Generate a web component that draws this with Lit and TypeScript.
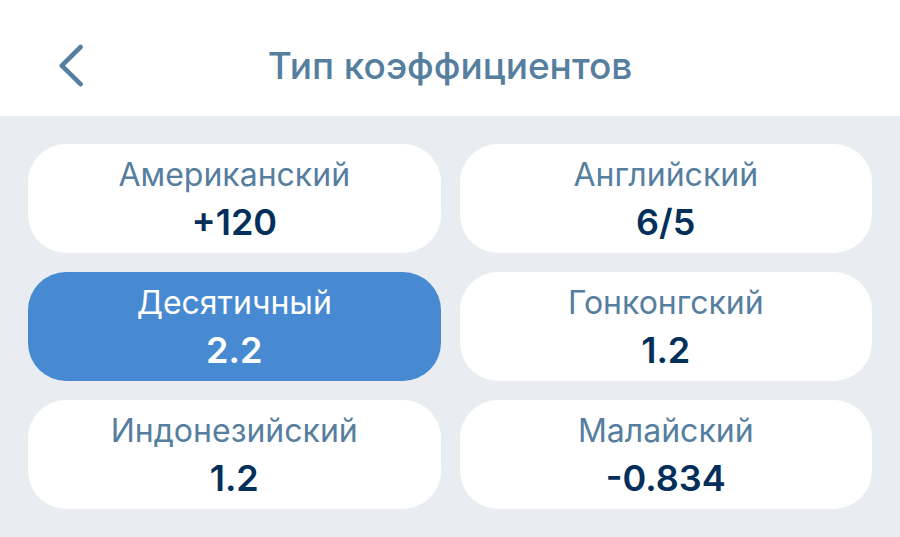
import { LitElement, html, css } from 'lit';
import { customElement, property, state } from 'lit/decorators.js';
import { classMap } from 'lit/directives/class-map.js';

interface OddsType {
  id: string;
  name: string;
  example: string;
}

const ODDS_TYPES: OddsType[] = [
  { id: 'american', name: 'Американский', example: '+120' },
  { id: 'english', name: 'Английский', example: '6/5' },
  { id: 'decimal', name: 'Десятичный', example: '2.2' },
  { id: 'hongkong', name: 'Гонконгский', example: '1.2' },
  { id: 'indonesian', name: 'Индонезийский', example: '1.2' },
  { id: 'malay', name: 'Малайский', example: '-0.834' },
];

@customElement('odds-header')
export class OddsHeader extends LitElement {
  static styles = css`
    :host {
      display: block;
      background: #fff;
    }
    .bar {
      display: grid;
      grid-template-columns: 84px 1fr 84px;
      align-items: center;
      padding: 24px 28px 8px;
    }
    .back {
      display: flex;
      align-items: center;
      justify-content: center;
      height: 84px;
      padding: 0;
      border: none;
      background: none;
      color: #557e9f;
      cursor: pointer;
    }
    .title {
      margin: 0;
      font-size: 37px;
      line-height: 48px;
      font-weight: 500;
      text-align: center;
      color: #557e9f;
    }
  `;

  @property() heading = '';

  render() {
    return html`
      <header class="bar">
        <button class="back" type="button" aria-label="Назад">
          <svg width="28" height="44" viewBox="0 0 28 44" fill="none" aria-hidden="true">
            <path d="M24.6 3 5.8 21.6l18.8 18.6" stroke="currentColor" stroke-width="4.6" stroke-linecap="round" stroke-linejoin="round" />
          </svg>
        </button>
        <h1 class="title">${this.heading}</h1>
      </header>
    `;
  }
}

@customElement('app-root')
export class AppRoot extends LitElement {
  static styles = css`
    :host {
      display: block;
      min-height: 100vh;
      background: #e9edf2;
      font-family: Inter, Roboto, 'Liberation Sans', sans-serif;
    }
    .options {
      display: grid;
      grid-template-columns: 1fr 1fr;
      gap: 19px;
      padding: 28px;
    }
    .option {
      display: flex;
      flex-direction: column;
      align-items: center;
      padding: 8px 16px 7px;
      border: none;
      border-radius: 38px;
      background: #fff;
      font-family: inherit;
      cursor: pointer;
    }
    .name {
      font-size: 32px;
      line-height: 46px;
      color: #557e9f;
    }
    .example {
      font-size: 36px;
      line-height: 48px;
      font-weight: 600;
      color: #032f5a;
    }
    .selected {
      background: #478ad1;
    }
    .selected .name,
    .selected .example {
      color: #fff;
    }
  `;

  @state() private selected = 'decimal';

  private select(id: string) {
    this.selected = id;
  }

  render() {
    return html`
      <odds-header heading="Тип коэффициентов"></odds-header>
      <main class="options">
        ${ODDS_TYPES.map(
          (type) => html`
            <button
              type="button"
              class=${classMap({ option: true, selected: type.id === this.selected })}
              aria-pressed=${type.id === this.selected}
              @click=${() => this.select(type.id)}
            >
              <span class="name">${type.name}</span>
              <span class="example">${type.example}</span>
            </button>
          `
        )}
      </main>
    `;
  }
}
